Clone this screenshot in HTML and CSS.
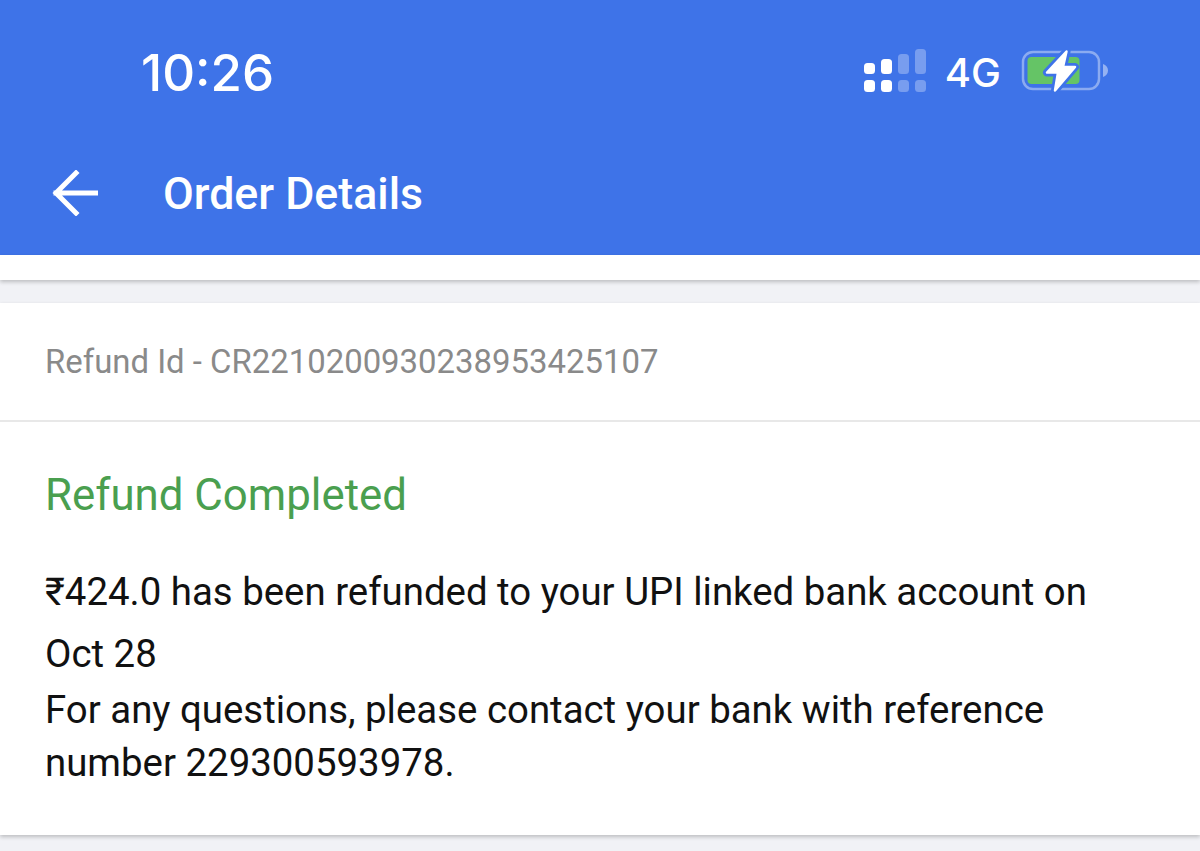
FILE: index.html
```html
<!DOCTYPE html>
<html lang="en">
<head>
  <meta charset="UTF-8" />
  <meta name="viewport" content="width=device-width, initial-scale=1.0" />
  <title>Order Details</title>
  <link rel="stylesheet" href="styles.css">
</head>
<body>
  <header class="app-header">
    <div class="status-bar">
      <span class="clock">10:26</span>
      <div class="status-icons">
        <svg class="signal" width="62" height="44" viewBox="0 0 62 44">
          <rect x="0" y="14" width="11" height="11" rx="3.500" fill="#fff"/>
          <rect x="17" y="10" width="11" height="15" rx="3.500" fill="#fff"/>
          <rect x="34" y="5" width="11" height="20" rx="3.500" fill="#fff" opacity=".3"/>
          <rect x="51" y="0" width="11" height="25" rx="3.500" fill="#fff" opacity=".3"/>
          <rect x="0" y="31" width="11" height="12" rx="3.500" fill="#fff"/>
          <rect x="17" y="31" width="11" height="12" rx="3.500" fill="#fff"/>
          <rect x="34" y="31" width="11" height="12" rx="3.500" fill="#fff" opacity=".3"/>
          <rect x="51" y="31" width="11" height="12" rx="3.500" fill="#fff" opacity=".3"/>
        </svg>
        <span class="network">4G</span>
        <svg class="battery" width="90" height="44" viewBox="0 0 90 44">
          <rect x="3" y="3" width="76" height="37" rx="10" fill="none" stroke="#fff" stroke-opacity=".4" stroke-width="2.500"/>
          <rect x="7.500" y="8" width="52" height="27" rx="4" fill="#65c466"/>
          <path d="M83 15c3 1 5 3.500 5 6.500s-2 5.500-5 6.500z" fill="#fff" opacity=".45"/>
          <path d="M46.500 2.500 27 23.500h11L35 41.500 55 18H43z" fill="#3e73e8" stroke="#3e73e8" stroke-width="8" stroke-linejoin="round"/>
          <path d="M46.500 2.500 27 23.500h11L35 41.500 55 18H43z" fill="#fff" stroke="#fff" stroke-width="2.500" stroke-linejoin="round"/>
        </svg>
      </div>
    </div>
    <div class="toolbar">
      <svg class="back" width="48" height="46" viewBox="0 0 48 46">
        <path d="M4 23H43.500M24 3 4 23l20 20" fill="none" stroke="#fff" stroke-width="5" stroke-linecap="square"/>
      </svg>
      <h1>Order Details</h1>
    </div>
  </header>

  <div class="top-strip"></div>

  <section class="card">
    <div class="refund-id">Refund Id - CR2210200930238953425107</div>
    <div class="refund-body">
      <h2>Refund Completed</h2>
      <p>
        <span class="line-first">₹424.0 has been refunded to your UPI linked bank account on</span>
        <span class="line-second">Oct 28</span>
        <span class="line-rest">For any questions, please contact your bank with reference</span>
        <span class="line-rest">number 229300593978.</span>
      </p>
    </div>
  </section>
</body>
</html>
```

FILE: styles.css
```css
* {
  box-sizing: border-box;
}
body {
  margin: 0;
  height: 851px;
  overflow: hidden;
  background: #f1f2f6;
  font-family: Roboto, "Liberation Sans", sans-serif;
}
.app-header {
  height: 255px;
  background: #3e73e8;
  color: #fff;
}
.status-bar {
  height: 145px;
  padding: 0 90px 0 141px;
  display: flex;
  align-items: center;
  justify-content: space-between;
}
.clock {
  font-family: Inter, "Liberation Sans", sans-serif;
  font-size: 51px;
  font-weight: 500;
}
.status-icons {
  display: flex;
  align-items: center;
  margin-bottom: 4px;
}
.signal {
  margin-right: 19px;
}
.network {
  font-family: Inter, "Liberation Sans", sans-serif;
  font-size: 40px;
  font-weight: 500;
  margin: 4px 19px 0 0;
}
.toolbar {
  display: flex;
  align-items: center;
  padding: 0 0 0 52px;
  height: 96px;
}
.toolbar h1 {
  margin: 2px 0 0 63px;
  font-size: 44.700px;
  font-weight: 500;
}
.top-strip {
  height: 25px;
  background: #fff;
  box-shadow: 0 2px 4px rgba(0,0,0,0.22);
  position: relative;
}
.card {
  margin-top: 23px;
  background: #fff;
  height: 532px;
  box-shadow: 0 2px 4px rgba(0,0,0,0.22);
}
.refund-id {
  height: 119px;
  padding: 41px 45px 0;
  border-bottom: 2px solid #e8e8e8;
  font-size: 32.900px;
  line-height: 36px;
  color: #8a8a8a;
}
.refund-body {
  padding: 48px 45px 0;
}
.refund-body h2 {
  margin: 0;
  font-size: 43.800px;
  font-weight: 400;
  line-height: 50px;
  color: #4a9f4f;
}
.refund-body p {
  margin: 0;
  padding-top: 41px;
  font-size: 38.400px;
  color: #111;
}
.refund-body span {
  display: block;
  white-space: nowrap;
}
.line-first {
  line-height: 62px;
}
.line-second {
  line-height: 62px;
  margin-bottom: -2px;
}
.line-rest {
  line-height: 53px;
}
```
